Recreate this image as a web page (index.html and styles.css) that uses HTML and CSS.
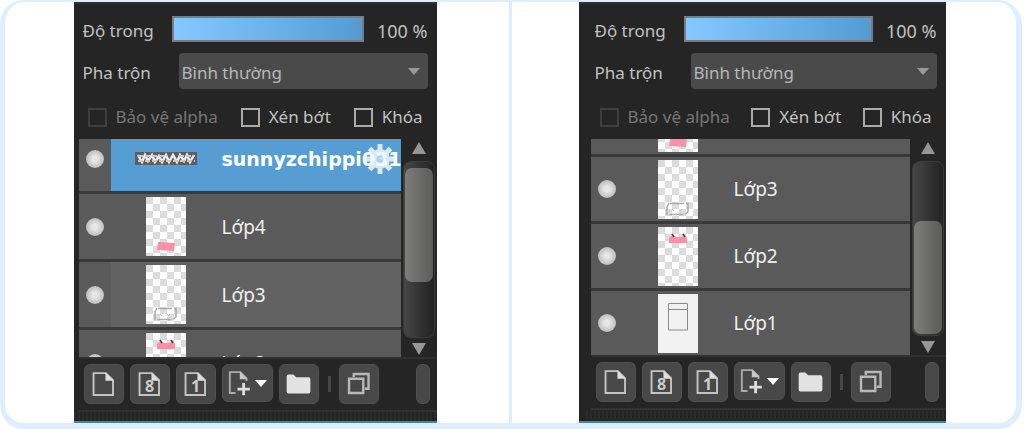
FILE: index.html
```html
<!DOCTYPE html>
<html lang="vi">
<head>
  <meta charset="UTF-8">
  <title>Layer</title>
  <link rel="stylesheet" href="styles.css">
</head>
<body>
  <!-- shared icons -->
  <svg class="sprite" aria-hidden="true">
    <symbol id="page" viewBox="0 0 40 40">
      <path d="M9 8.500H22L29.500 16V31.500H9Z" fill="none" stroke="#c4c4c4" stroke-width="2"/>
      <path d="M21.500 8L30 16.500H21.500Z" fill="#dedede"/>
    </symbol>
    <symbol id="page-add" viewBox="0 0 28 40">
      <path d="M13 30.500H7V8.500H18L24.500 15V18" fill="none" stroke="#aaa" stroke-width="2"/>
      <path d="M17.500 8L25.500 16H17.500Z" fill="#c8c8c8"/>
      <path d="M21.500 20V33M15 26.500H28" stroke="#ddd" stroke-width="3"/>
    </symbol>
    <symbol id="folder" viewBox="0 0 40 40">
      <path d="M7 12Q7 10 9 10H14L17 13H30Q32 13 32 15V28Q32 30 30 30H9Q7 30 7 28Z" fill="#e2e2e2"/>
    </symbol>
    <symbol id="copy" viewBox="0 0 40 40">
      <path d="M14.500 13V9.500H30V25H26" fill="none" stroke="#b8b8b8" stroke-width="2.500"/>
      <path d="M9.500 14.500H24.500V29.500H9.500Z" fill="none" stroke="#b8b8b8" stroke-width="2.500"/>
    </symbol>
    <symbol id="gear" viewBox="0 0 30 30">
      <g stroke="#f2f7fc" stroke-width="5">
        <path d="M15 0V30M0 15H30M4.500 4.500L25.500 25.500M25.500 4.500L4.500 25.500"/>
      </g>
      <circle cx="15" cy="15" r="10" fill="#f2f7fc"/>
      <circle cx="15" cy="15" r="3.500" fill="#bcd6ee"/>
    </symbol>
    <symbol id="art-card" viewBox="0 0 40 59">
      <path d="M12 43.500H30V52L27 54.500H9V47L11 43" fill="none" stroke="#aaa" stroke-width="1.500" stroke-dasharray="14 2"/>
      <path d="M14 49L16 51M24 49L22 51" stroke="#bbb"/>
    </symbol>
    <symbol id="art-foot" viewBox="0 0 40 59">
      <path d="M12 45L29 46L28 54L11 53Z" fill="#fd8fa6"/>
    </symbol>
    <symbol id="art-head" viewBox="0 0 40 59">
      <path d="M11 11L15 8L18 10H24L27 8L29 11L29 16H11Z" fill="#fd8fa6"/>
      <path d="M14 7L16 10M25 7L27 10" stroke="#5b3a44" stroke-width="1.500"/>
    </symbol>
    <symbol id="art-box" viewBox="0 0 40 59">
      <path d="M10.500 9.500H29.500V36H10.500ZM10.500 15.500H29.500" fill="none" stroke="#8b8b8b"/>
    </symbol>
    <symbol id="banner" viewBox="0 0 62 13">
      <path d="M0 0H62V13H0Z" fill="#5b5e62"/>
      <path d="M3 3L7 10L10 3L13 9L17 3L20 10L24 4L27 10L31 3L34 10L38 3L42 10L45 3L49 9L52 3L55 10L59 3" fill="none" stroke="#eee" stroke-width="2.500"/>
      <path d="M3 9H60M3 4H32M44 4H60" stroke="#c9c9c9" stroke-width="2" stroke-dasharray="5 2"/>
    </symbol>
  </svg>

  <main class="frame">
    <section class="cell">
      <div class="panel">
        <div class="controls">
          <div class="row">
            <label for="opacity1">Độ trong</label>
            <input class="opacity" id="opacity1" type="range" value="100">
            <output for="opacity1">100 %</output>
          </div>
          <div class="row blend-row">
            <label for="blend1">Pha trộn</label>
            <div class="select">
              <select id="blend1"><option>Bình thường</option></select>
              <span class="arrow"></span>
            </div>
          </div>
          <div class="checks">
            <label class="disabled"><input type="checkbox" disabled>Bảo vệ alpha</label>
            <label><input type="checkbox">Xén bớt</label>
            <label><input type="checkbox">Khóa</label>
          </div>
        </div>
        <div class="layers">
          <ul class="list">
            <li class="layer selected">
              <span class="eye"></span>
              <div class="info">
                <span class="thumb-cell"><svg class="banner"><use href="#banner"/></svg></span>
                <span class="name">sunnyzchippi031</span>
                <svg class="gear"><use href="#gear"/></svg>
              </div>
            </li>
            <li class="layer">
              <span class="eye"></span>
              <div class="info">
                <span class="thumb-cell"><svg class="thumb"><use href="#art-foot"/></svg></span>
                <span class="name">Lớp4</span>
              </div>
            </li>
            <li class="layer hover">
              <span class="eye"></span>
              <div class="info">
                <span class="thumb-cell"><svg class="thumb"><use href="#art-card"/></svg></span>
                <span class="name">Lớp3</span>
              </div>
            </li>
            <li class="layer">
              <span class="eye"></span>
              <div class="info">
                <span class="thumb-cell"><svg class="thumb"><use href="#art-head"/></svg></span>
                <span class="name">Lớp2</span>
              </div>
            </li>
          </ul>
          <div class="scroll">
            <span class="up"></span>
            <div class="track"><div class="handle"></div></div>
            <span class="down"></span>
          </div>
        </div>
        <div class="toolbar">
          <button aria-label="Lớp mới"><svg><use href="#page"/></svg></button>
          <button><svg><use href="#page"/></svg><span class="bit">8</span></button>
          <button><svg><use href="#page"/></svg><span class="bit">1</span></button>
          <button class="add" aria-label="Thêm"><svg><use href="#page-add"/></svg><span class="arrow"></span></button>
          <button aria-label="Thư mục"><svg><use href="#folder"/></svg></button>
          <span class="sep"></span>
          <button aria-label="Nhân đôi"><svg><use href="#copy"/></svg></button>
          <button class="more" aria-label="Thêm nữa"></button>
        </div>
        <div class="grip"></div>
      </div>
    </section>

    <section class="cell">
      <div class="panel bottom">
        <div class="controls">
          <div class="row">
            <label for="opacity2">Độ trong</label>
            <input class="opacity" id="opacity2" type="range" value="100">
            <output for="opacity2">100 %</output>
          </div>
          <div class="row blend-row">
            <label for="blend2">Pha trộn</label>
            <div class="select">
              <select id="blend2"><option>Bình thường</option></select>
              <span class="arrow"></span>
            </div>
          </div>
          <div class="checks">
            <label class="disabled"><input type="checkbox" disabled>Bảo vệ alpha</label>
            <label><input type="checkbox">Xén bớt</label>
            <label><input type="checkbox">Khóa</label>
          </div>
        </div>
        <div class="layers">
          <ul class="list">
            <li class="layer">
              <span class="eye"></span>
              <div class="info">
                <span class="thumb-cell"><svg class="thumb"><use href="#art-foot"/></svg></span>
                <span class="name"></span>
              </div>
            </li>
            <li class="layer">
              <span class="eye"></span>
              <div class="info">
                <span class="thumb-cell"><svg class="thumb"><use href="#art-card"/></svg></span>
                <span class="name">Lớp3</span>
              </div>
            </li>
            <li class="layer">
              <span class="eye"></span>
              <div class="info">
                <span class="thumb-cell"><svg class="thumb"><use href="#art-head"/></svg></span>
                <span class="name">Lớp2</span>
              </div>
            </li>
            <li class="layer">
              <span class="eye"></span>
              <div class="info">
                <span class="thumb-cell"><svg class="thumb plain"><use href="#art-box"/></svg></span>
                <span class="name">Lớp1</span>
              </div>
            </li>
          </ul>
          <div class="scroll">
            <span class="up"></span>
            <div class="track"><div class="handle"></div></div>
            <span class="down"></span>
          </div>
        </div>
        <div class="toolbar">
          <button aria-label="Lớp mới"><svg><use href="#page"/></svg></button>
          <button><svg><use href="#page"/></svg><span class="bit">8</span></button>
          <button><svg><use href="#page"/></svg><span class="bit">1</span></button>
          <button class="add" aria-label="Thêm"><svg><use href="#page-add"/></svg><span class="arrow"></span></button>
          <button aria-label="Thư mục"><svg><use href="#folder"/></svg></button>
          <span class="sep"></span>
          <button aria-label="Nhân đôi"><svg><use href="#copy"/></svg></button>
          <button class="more" aria-label="Thêm nữa"></button>
        </div>
        <div class="grip"></div>
      </div>
    </section>
  </main>
</body>
</html>
```
FILE: styles.css
```css
* {
  box-sizing: border-box;
  margin: 0;
  padding: 0;
}

body {
  background-color: #fff;
  color: #c2c2c2;
  font-family: "Noto Sans", sans-serif;
  font-size: 17px;
  line-height: 24px;
}

.sprite {
  display: none;
}

.frame {
  display: flex;
  margin-right: 2px;
  border: 6px solid #ddeffe;
  border-top-width: 2px;
  border-left-width: 5px;
  border-radius: 24px;
}

.cell {
  flex: 1;
  display: flex;
  justify-content: center;
  padding-right: 4px;
}

.cell + .cell {
  border-left: 3px solid #ddeffe;
}

.panel {
  width: 100%;
  max-width: 363px;
  background-color: #252525;
  border-top: 2px solid #303236;
  border-bottom: 2px solid #4580b0;
}

.panel.bottom {
  max-width: 367px;
  padding-left: 7px;
}

/* opacity, blend mode and options */
.controls {
  padding: 12px 9px 0;
}

.row {
  display: flex;
  align-items: center;
  height: 26px;
}

.row > label {
  width: 89px;
  padding-top: 4px;
}

.opacity {
  flex: 1;
  min-width: 0;
  height: 26px;
  appearance: none;
  border: 2px solid #777d82;
  background: linear-gradient(to right, #85c8ff, #559bd2);
}

.opacity::-webkit-slider-thumb {
  appearance: none;
  width: 1px;
  height: 22px;
}

.row output {
  width: 64px;
  padding-top: 4px;
  font-size: 18px;
  text-align: right;
}

.blend-row {
  height: 36px;
  margin-top: 11px;
}

.select {
  flex: 1;
  position: relative;
  margin-left: 7px;
}

.select select {
  width: 100%;
  height: 36px;
  padding: 4px 3px 0;
  appearance: none;
  border: none;
  border-radius: 4px;
  background-color: #4a4a4a;
  color: #b8b8b8;
  font: inherit;
}

.arrow {
  border: 6px solid transparent;
  border-top: 7px solid #fff;
  border-bottom: none;
}

.select .arrow {
  position: absolute;
  top: 15px;
  right: 8px;
  border-top-color: #9a9a9a;
}

.checks {
  display: flex;
  justify-content: space-between;
  height: 50px;
  padding: 6px 5px 0;
}

.checks label {
  display: flex;
  align-items: center;
  gap: 9px;
}

.checks .disabled {
  color: #777;
}

.checks input {
  width: 19px;
  height: 19px;
  appearance: none;
  border: 2px solid #aaa;
}

.checks input:disabled {
  border-color: #3e3e3e;
}

/* layer list */
.layers {
  display: flex;
  height: 218px;
  padding-left: 5px;
}

.bottom .layers {
  height: 216px;
}

.list {
  flex: 1;
  min-width: 0;
  overflow: hidden;
  list-style: none;
}

/* this list is scrolled a little */
.list .layer:first-child {
  margin-top: -13px;
}

/* this one is scrolled to the end */
.bottom .list {
  display: flex;
  flex-direction: column;
  justify-content: flex-end;
}

.layer {
  display: flex;
  flex-shrink: 0;
  height: 68px;
  border-bottom: 3px solid #393939;
  background-color: #5a5a5a;
}

.bottom .layer {
  height: 67px;
}

.bottom .layer:last-child {
  height: 64px;
  border-bottom: none;
}

.eye {
  width: 18px;
  height: 18px;
  margin: auto 7px;
  border-radius: 50%;
  background: radial-gradient(#e6e6e6 20%, #bdbdbd 70%);
}

.info {
  flex: 1;
  min-width: 0;
  position: relative;
  display: flex;
  align-items: center;
}

.selected .info {
  background-color: #559dd3;
}

.hover .info {
  background-color: #626262;
}

.thumb-cell {
  width: 111px;
  display: flex;
  justify-content: center;
}

.thumb {
  width: 40px;
  height: 59px;
  background: repeating-conic-gradient(#fff 0 25%, #dcdcdc 0 50%) 0 0 / 14px 14px;
}

.thumb.plain {
  background: #f2f2f2;
}

.banner {
  width: 62px;
  height: 13px;
}

.name {
  flex: 1;
  overflow: hidden;
  color: #f0f0f0;
  font-size: 19px;
  white-space: nowrap;
}

.selected .name {
  color: #fff;
  font-family: "DejaVu Sans", sans-serif;
  font-weight: bold;
}

.gear {
  position: absolute;
  right: 6px;
  width: 30px;
  height: 30px;
  opacity: 0.85;
}

/* scroll bar */
.scroll {
  width: 32px;
  margin: 0 2px;
  display: flex;
  flex-direction: column;
  align-items: center;
}

.up {
  margin: 3px 0 7px;
  border: 7px solid transparent;
  border-top: none;
  border-bottom: 12px solid #969696;
}

.down {
  margin: 5px 0 2px;
  border: 7px solid transparent;
  border-top: 12px solid #969696;
  border-bottom: none;
}

.track {
  flex: 1;
  width: 100%;
  display: flex;
  flex-direction: column;
  padding: 6px 1px 1px;
  border: 1px solid #3b3b3b;
  border-radius: 8px;
  background: linear-gradient(to right, #464646, #222);
}

.handle {
  height: 68%;
  border-radius: 7px;
  background: linear-gradient(to right, #7d7d7b, #5b5b5b);
}

.bottom .handle {
  margin-top: auto;
}

/* buttons under the list */
.toolbar {
  display: flex;
  gap: 6px;
  padding: 5px 7px 6px 5px;
  margin-left: 5px;
  border-top: 2px solid #303030;
  border-bottom: 2px solid #323232;
}

.toolbar button {
  position: relative;
  display: flex;
  align-items: center;
  width: 40px;
  height: 40px;
  border: 1px solid #505050;
  border-radius: 6px;
  background-color: #484848;
  color: #ccc;
  font: bold 16px/20px "Noto Sans", sans-serif;
}

.toolbar svg {
  width: 100%;
  height: 38px;
}

.bit {
  position: absolute;
  inset: 11px 0 0;
}

.toolbar .add {
  width: 51px;
  height: 38px;
}

.add svg {
  width: 27px;
}

.add .arrow {
  margin-left: 5px;
}

.sep {
  width: 3px;
  height: 16px;
  margin: 12px 2px 0 3px;
  background-color: #474747;
}

.toolbar .more {
  width: 14px;
  margin-left: auto;
}

.grip {
  height: 9px;
  background: repeating-linear-gradient(to right, #2b2b2b 0 2px, #232323 2px 4px);
}
```
